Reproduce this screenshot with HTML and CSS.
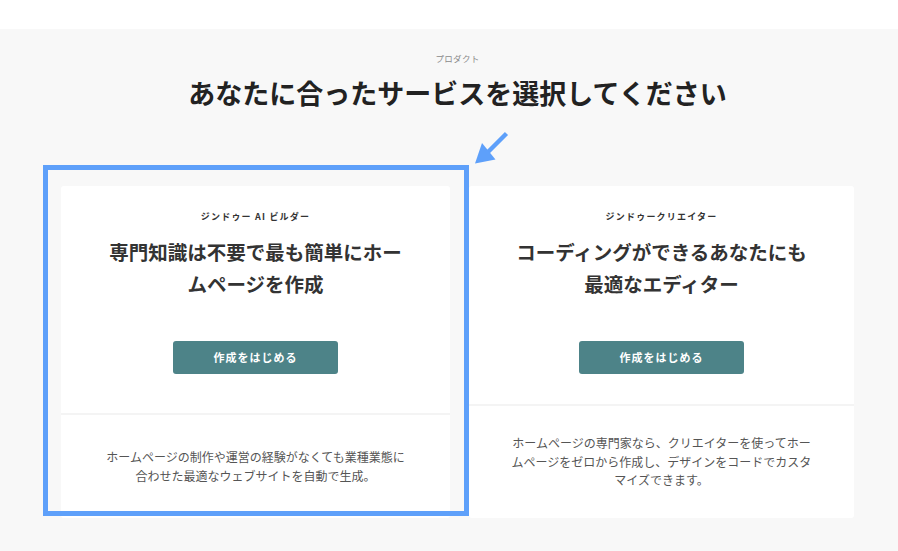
FILE: index.html
```html
<!DOCTYPE html>
<html lang="ja">
<head>
	<meta charset="utf-8">
	<title>プロダクト</title>
	<link rel="stylesheet" href="styles.css">
</head>
<body>
	<header class="topbar"></header>
	<section class="products">
		<div class="inner">
			<p class="eyebrow">プロダクト</p>
			<h1 class="headline">あなたに合ったサービスを選択してください</h1>
			<div class="cards">
				<div class="card card-builder">
					<div class="card-top">
						<p class="card-label">ジンドゥー AI ビルダー</p>
						<h2 class="card-title">専門知識は不要で最も簡単にホームページを作成</h2>
						<a class="btn" href="#">作成をはじめる</a>
					</div>
					<div class="card-bottom">
						<p class="card-text">ホームページの制作や運営の経験がなくても業種業態に合わせた最適なウェブサイトを自動で生成。</p>
					</div>
				</div>
				<div class="card card-creator">
					<div class="card-top">
						<p class="card-label">ジンドゥークリエイター</p>
						<h2 class="card-title">コーディングができるあなたにも最適なエディター</h2>
						<a class="btn" href="#">作成をはじめる</a>
					</div>
					<div class="card-bottom">
						<p class="card-text">ホームページの専門家なら、クリエイターを使ってホームページをゼロから作成し、デザインをコードでカスタマイズできます。</p>
					</div>
				</div>
				<!-- 注目枠と矢印 -->
				<div class="highlight"></div>
				<svg class="pointer" width="42" height="42" viewBox="0 0 42 42">
					<line x1="36.5" y1="5.5" x2="17" y2="25" stroke="#5ea0fa" stroke-width="4.5"/>
					<polygon points="5,35.5 12,15 25.5,31.5" fill="#5ea0fa"/>
				</svg>
			</div>
		</div>
	</section>
</body>
</html>
```

FILE: styles.css
```css
body{
	margin:0;
	padding:0;
	background-color:#fff;
	font-family:"Noto Sans CJK JP","Noto Sans",sans-serif;
	color:#333;
}
.topbar{
	height:29px;
	background-color:#fff;
}
.products{
	background-color:#f8f8f8;
	padding-top:22px;
	min-height:500px;
}
.inner{
	margin-left:61px;
	width:793px;
}
.eyebrow{
	margin:0;
	text-align:center;
	font-size:8.5px;
	line-height:14px;
	color:#8a8a8a;
	letter-spacing:0.3px;
}
.headline{
	margin:8px 0 0;
	text-align:center;
	font-size:27px;
	line-height:40px;
	font-weight:700;
	color:#222;
}
.cards{
	position:relative;
	display:grid;
	grid-template-columns:389px 385px;
	column-gap:19px;
	margin-top:73px;
}
.card{
	display:flex;
	flex-direction:column;
	height:332px;
	background-color:#fff;
	border-radius:3px;
}
.card-top{
	display:flex;
	flex-direction:column;
	align-items:center;
	padding:24px 0 30px;
	text-align:center;
}
.card-builder .card-top{
	padding-bottom:39px;
}
.card-label{
	margin:0;
	font-size:9px;
	line-height:14px;
	font-weight:700;
	letter-spacing:1.2px;
	color:#333;
}
.card-title{
	margin:12px 0 0;
	width:302px;
	font-size:19.5px;
	line-height:32px;
	font-weight:700;
	color:#333;
}
.btn{
	display:block;
	margin-top:41px;
	width:165px;
	height:33px;
	line-height:33px;
	border-radius:3px;
	background-color:#4d8388;
	color:#fff;
	font-size:11px;
	font-weight:700;
	letter-spacing:1px;
	text-decoration:none;
}
.card-bottom{
	flex:1;
	display:flex;
	align-items:center;
	justify-content:center;
	border-top:2px solid #f4f4f4;
}
.card-text{
	margin:0;
	width:302px;
	text-align:center;
	font-size:12px;
	line-height:18.5px;
	color:#555;
}
.highlight{
	position:absolute;
	left:-18px;
	top:-21px;
	width:426px;
	height:351px;
	box-sizing:border-box;
	border:5px solid #5ea0fa;
}
.pointer{
	position:absolute;
	left:409px;
	top:-58px;
}
```
